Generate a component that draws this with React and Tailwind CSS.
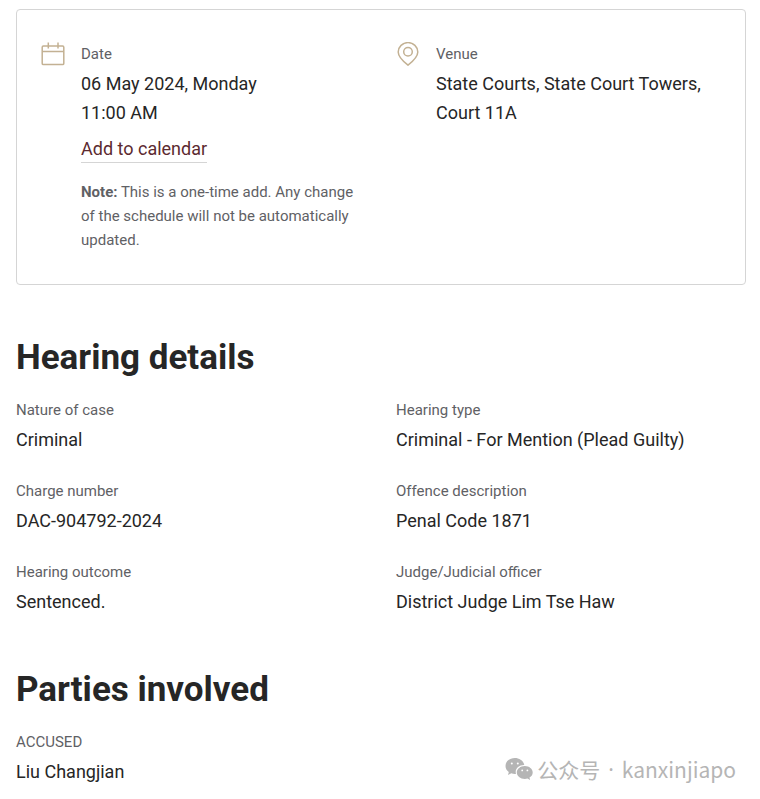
const hearingDetails = [
  { label: "Nature of case", value: "Criminal" },
  { label: "Hearing type", value: "Criminal - For Mention (Plead Guilty)" },
  { label: "Charge number", value: "DAC-904792-2024" },
  { label: "Offence description", value: "Penal Code 1871" },
  { label: "Hearing outcome", value: "Sentenced." },
  { label: "Judge/Judicial officer", value: "District Judge Lim Tse Haw" },
];

const parties = [{ label: "ACCUSED", value: "Liu Changjian" }];

const CalendarIcon = () => (
  <svg viewBox="0 0 24 24" className="w-6 h-6 shrink-0" fill="none" stroke="#c3b193" strokeWidth="1.5" aria-hidden="true">
    <rect x="1.2" y="4" width="21.6" height="18.6" rx="1.2" />
    <path d="M1.200 9.500h21.600M7.300 0.500v6M17 0.500v6" />
  </svg>
);

const PinIcon = () => (
  <svg viewBox="0 0 24 24" className="w-6 h-6 shrink-0" fill="none" stroke="#c3b193" strokeWidth="1.5" strokeLinejoin="round" aria-hidden="true">
    <path d="M12 23.2C8.200 20.200 2.200 15.200 2.200 10A9.800 9.400 0 0 1 21.800 10C21.800 15.200 15.800 20.200 12 23.200Z" />
    <circle cx="12" cy="9.700" r="4.300" />
  </svg>
);

const WeChatIcon = () => (
  <svg viewBox="0 0 28 24" className="w-7 h-6 shrink-0" aria-hidden="true">
    <path
      fill="#b5b5b5"
      d="M9.800 1C4.600 1 0.500 4.500 0.500 8.900c0 2.500 1.300 4.600 3.300 6.100L3 18l3.300-1.700c1.200.4 2.300.6 3.500.6h1.200c-.2-.6-.3-1.200-.3-1.800 0-3.900 3.700-7 8.200-7h.4C18.600 3.900 14.600 1 9.800 1Z"
    />
    <path
      fill="#b5b5b5"
      d="M27.700 15.400c0-3.500-3.500-6.400-7.900-6.400s-8 2.900-8 6.400 3.500 6.500 8 6.500c1 0 1.900-.1 2.700-.4l2.600 1.500-.6-2.500c2-1.200 3.200-3 3.200-5.100Z"
    />
    <g fill="#fff">
      <circle cx="6.800" cy="6.500" r="1" />
      <circle cx="12.800" cy="6.500" r="1" />
      <circle cx="17.200" cy="13.400" r="0.900" />
      <circle cx="22.400" cy="13.400" r="0.900" />
    </g>
  </svg>
);

const Field = ({ label, value }) => (
  <div>
    <dt className="text-[15px] leading-6 text-[#5f6165]">{label}</dt>
    <dd className="mt-[3px] text-lg leading-[29px] text-[#262626]">{value}</dd>
  </div>
);

const Section = ({ title, fields }) => (
  <section className="pt-[51px] pb-px">
    <h2 className="mb-[18px] text-[35px] leading-[44px] font-bold text-[#262626]">{title}</h2>
    <dl className="grid grid-cols-2 gap-x-[30px] gap-y-[25px]">
      {fields.map((f) => (
        <Field key={f.label} label={f.label} value={f.value} />
      ))}
    </dl>
  </section>
);

export default function App() {
  return (
    <main className="relative bg-white pt-[9px] pr-[14px] pb-3 pl-4 font-['Roboto',sans-serif]">
      {/* DATE AND VENUE */}
      <div className="grid grid-cols-2 gap-[30px] rounded border border-[#d5d5d5] px-6 py-8">
        <div className="flex gap-4">
          <CalendarIcon />
          <div>
            <dl>
              <Field
                label="Date"
                value={
                  <>
                    06 May 2024, Monday
                    <br />
                    11:00 AM
                  </>
                }
              />
            </dl>
            <div className="mt-2 flex">
              <a href="#calendar" className="border-b border-[#d5d5d5] text-lg leading-[27px] text-[#5c2a30]">
                Add to calendar
              </a>
            </div>
            <p className="mt-[17px] text-[15px] leading-6 text-[#5f6165]">
              <strong className="font-bold">Note:</strong> This is a one-time add. Any change of the
              schedule will not be automatically updated.
            </p>
          </div>
        </div>

        <div className="flex gap-4">
          <PinIcon />
          <dl>
            <Field label="Venue" value="State Courts, State Court Towers, Court 11A" />
          </dl>
        </div>
      </div>

      <Section title="Hearing details" fields={hearingDetails} />
      <Section title="Parties involved" fields={parties} />

      {/* WATERMARK */}
      <div className="absolute right-6 bottom-4 flex items-center gap-1 font-['Noto_Sans_CJK_SC',sans-serif] text-[21px] leading-7 text-[#b5b5b5]">
        <WeChatIcon />
        <div className="flex gap-2">
          <span>公众号</span>
          <span className="font-['Noto_Sans',sans-serif]">·</span>
          <span>kanxinjiapo</span>
        </div>
      </div>
    </main>
  );
}
